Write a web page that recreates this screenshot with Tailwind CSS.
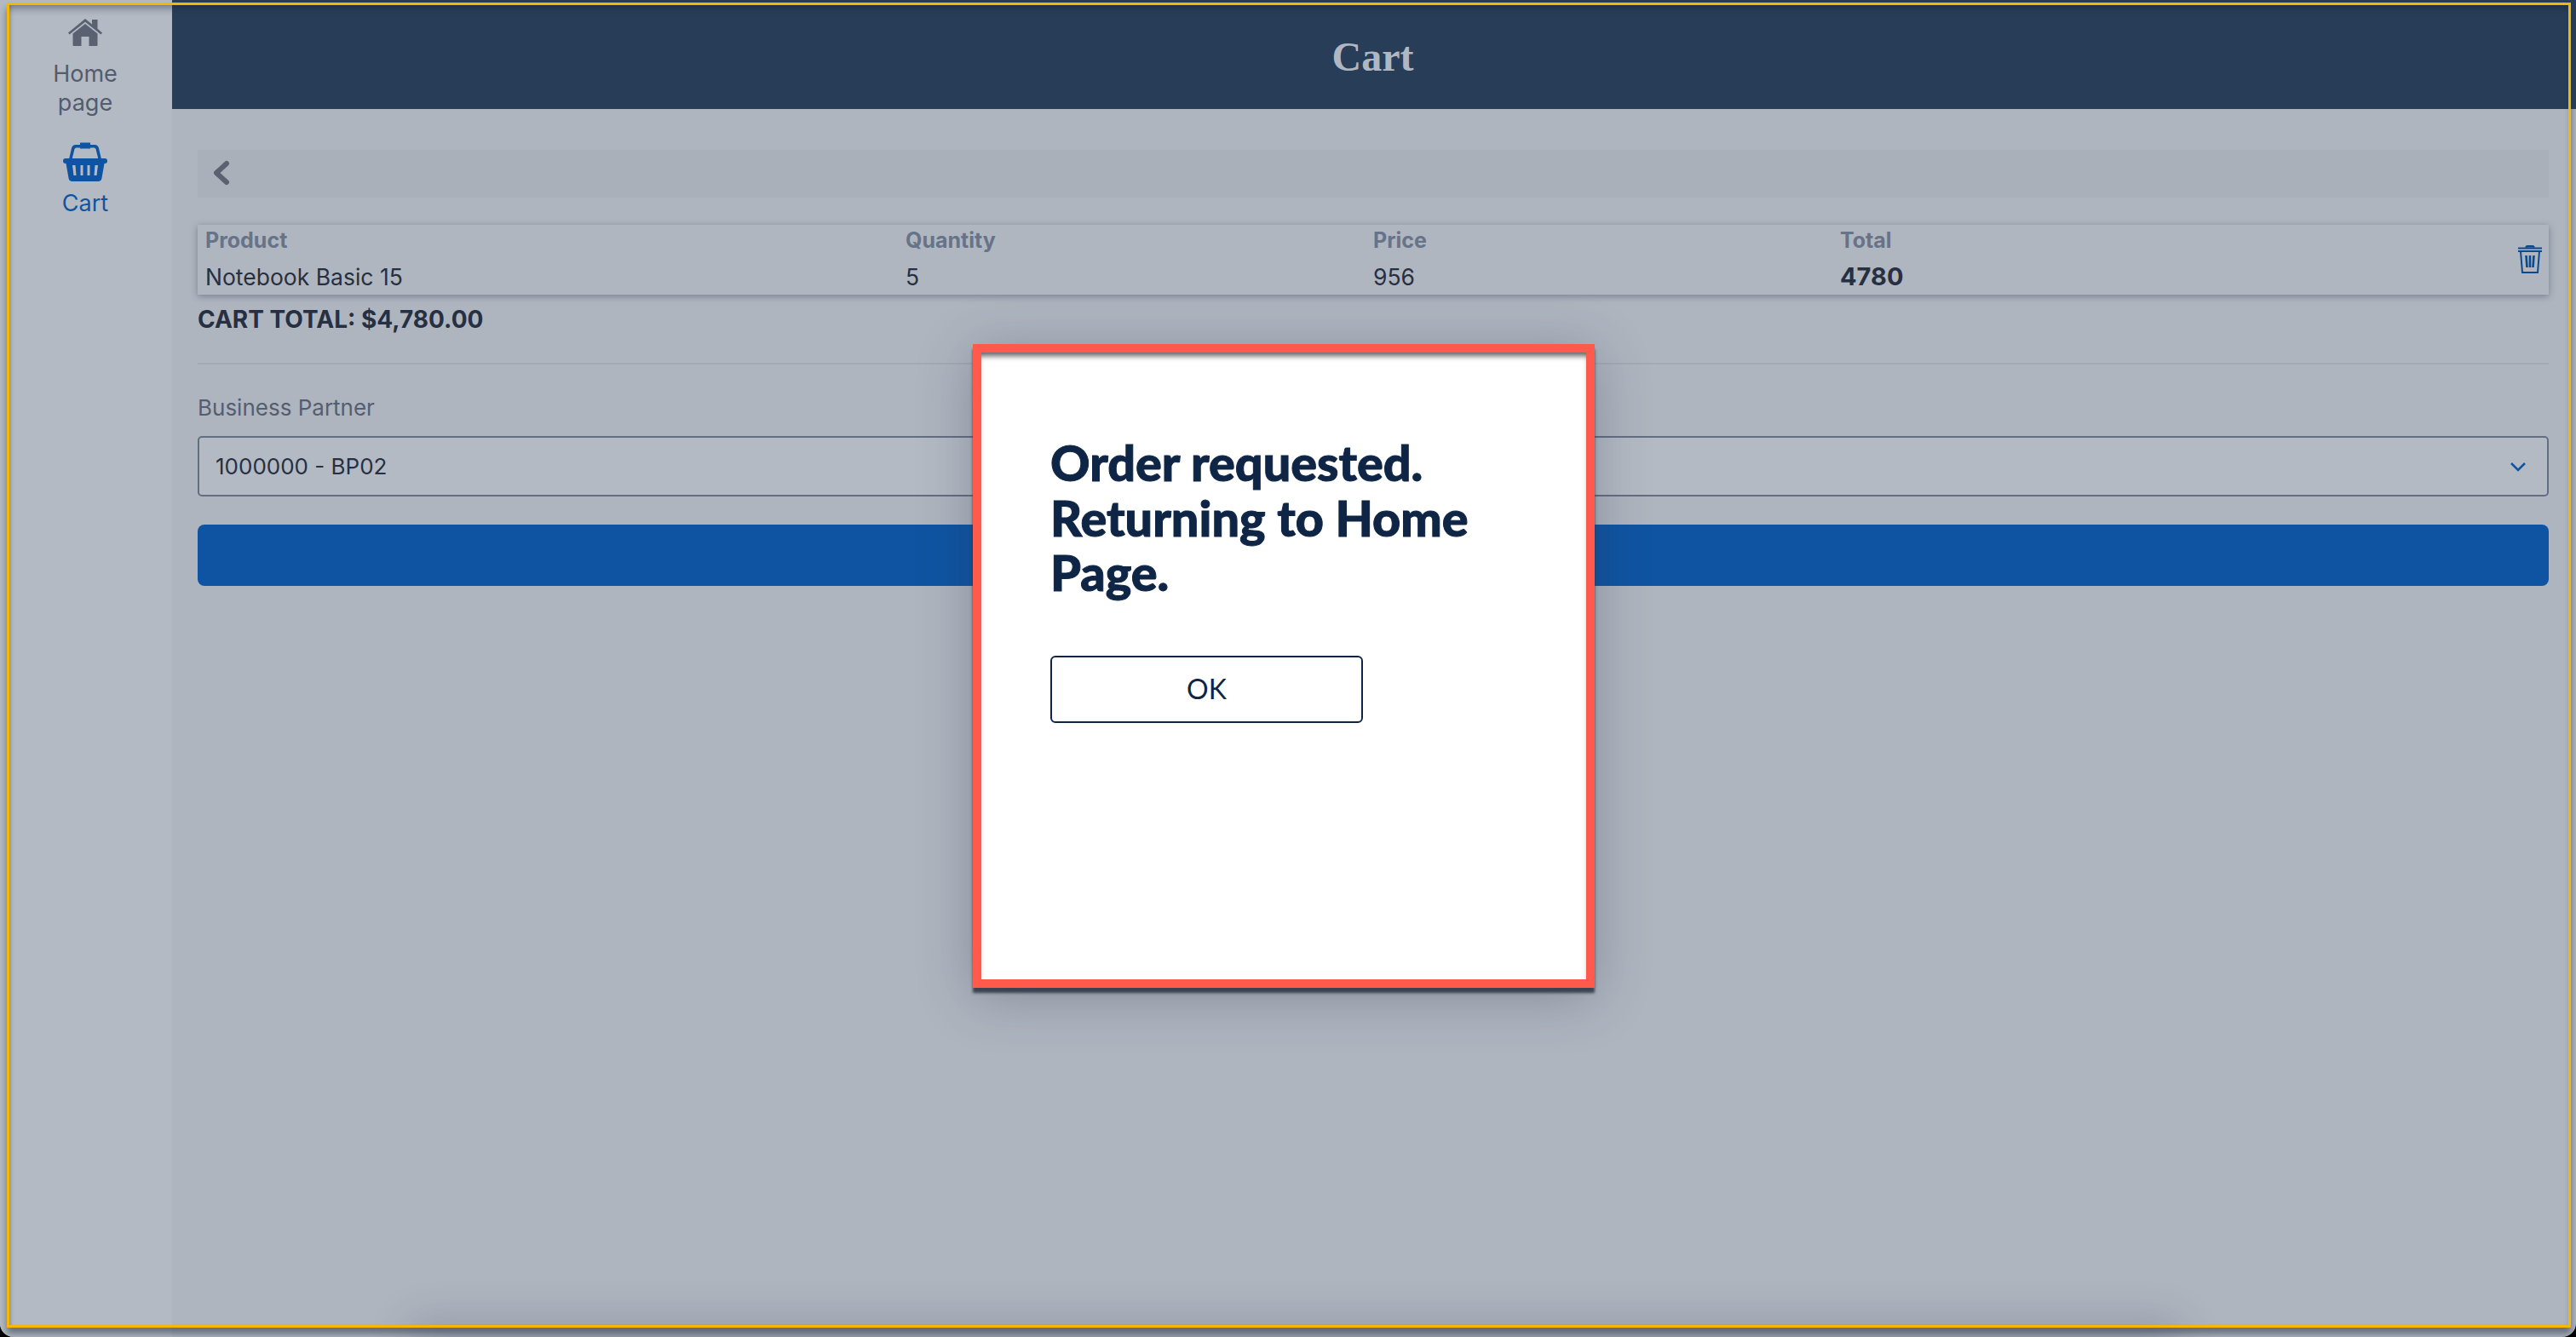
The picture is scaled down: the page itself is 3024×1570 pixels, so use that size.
<!DOCTYPE html>
<html lang="en">
<head>
  <meta charset="UTF-8" />
  <title>Cart</title>
  <script src="https://cdn.jsdelivr.net/npm/@tailwindcss/browser@4"></script>
</head>
<body class="bg-black">
  <div class="relative w-[3024px] h-[1570px] overflow-hidden rounded-b-[16px] flex bg-[#aeb5bf] font-['Inter',sans-serif]">

    <!-- sidebar -->
    <aside class="w-[202px] shrink-0 flex flex-col items-center pr-[2px] bg-[#b3bac4] text-[27px] leading-[34px]">
      <svg class="mt-[22px] w-[40px] h-[32px]" viewBox="0 0 40 32" fill="#5a6272">
        <path d="M20 0 L28 6.500 V1 H34.500 V11.800 L40 16.500 L38.500 18.500 L20 3.700 L1.500 18.500 L0 16.500 Z" />
        <path d="M20 6 L34.500 17.500 V31 Q34.500 32 33.500 32 H24.500 V21 H15.500 V32 H6.500 Q5.500 32 5.500 31 V17.500 Z" />
      </svg>
      <div class="mt-[16px] text-center text-[#545c6c]">Home<br>page</div>
      <svg class="mt-[29px] w-[52px] h-[46px]" viewBox="0 0 52 46" fill="#0f54a2">
        <path d="M7 20 L10 7 Q11 3 15 3 H20 V0.500 H32 V3 H37 Q41 3 42 7 L45 20 H41.500 L38.500 8 Q38 6.500 36.500 6.500 H32 V7.500 H20 V6.500 H15.500 Q14 6.500 13.500 8 L10.500 20 Z" />
        <path fill-rule="evenodd" d="M3 19 H49 Q52 19 52 22 Q52 25 49 25 H48.500 L45.500 42 Q45 46 41 46 H11 Q7 46 6.500 42 L3.500 25 H3 Q0 25 0 22 Q0 19 3 19 Z M11 27 L12.500 39 H15.500 L14.500 27 Z M20.500 27 V39 H23.500 V27 Z M28.500 27 V39 H31.500 V27 Z M37.500 27 L36.500 39 H39.500 L41 27 Z" />
      </svg>
      <div class="mt-[9px] text-[#0f54a2]">Cart</div>
    </aside>

    <!-- main -->
    <main class="flex-1 flex flex-col">
      <header class="h-[128px] flex items-center justify-center pt-[5px] pr-[3px] bg-[#283e58]">
        <h1 class="font-['Liberation_Serif',serif] font-bold text-[48px] text-[#b0b7c2]">Cart</h1>
      </header>

      <div class="flex flex-col pl-[30px] pr-[32px]">
        <div class="mt-[48px] h-[56px] flex items-center pl-[18px] pb-[2px] bg-[#a9b0ba]">
          <svg class="w-[20px] h-[30px]" viewBox="0 0 20 30" fill="none" stroke="#5a6272" stroke-width="6" stroke-linecap="round" stroke-linejoin="round">
            <path d="M16 4 L4 15 L16 26" />
          </svg>
        </div>

        <div class="relative mt-[32px] h-[82px] bg-[#afb6c0] shadow-[0_2px_8px_rgba(40,50,70,0.4)] grid grid-cols-[822px_549px_548px_1fr] pl-[9px] pt-[2px]">
          <div>
            <div class="text-[25px] leading-[32px] font-bold text-[#667388]">Product</div>
            <div class="mt-[10px] text-[26.500px] leading-[34px] text-[#263042]">Notebook Basic 15</div>
          </div>
          <div>
            <div class="text-[25px] leading-[32px] font-bold text-[#667388]">Quantity</div>
            <div class="mt-[10px] text-[26.500px] leading-[34px] text-[#263042]">5</div>
          </div>
          <div>
            <div class="text-[25px] leading-[32px] font-bold text-[#667388]">Price</div>
            <div class="mt-[10px] text-[26.500px] leading-[34px] text-[#263042]">956</div>
          </div>
          <div>
            <div class="text-[25px] leading-[32px] font-bold text-[#667388]">Total</div>
            <div class="mt-[10px] text-[29px] leading-[34px] font-bold text-[#263042]">4780</div>
          </div>
          <svg class="absolute right-[8px] top-[24px] w-[28px] h-[33px]" viewBox="0 0 28 33" fill="none" stroke="#0b4a90" stroke-width="2">
            <path d="M0 3.500 H28 M0 7 H28" />
            <path d="M9 2.500 Q10 0.500 14 0.500 Q18 0.500 19 2.500" fill="#0b4a90" />
            <path d="M3 7 L5 32 H23 L25 7" />
            <path d="M9.500 12 L10.500 26 M14 12 V26 M18.500 12 L17.500 26" stroke-width="2.600" />
          </svg>
        </div>

        <div class="mt-[12px] text-[28px] leading-[34px] font-bold text-[#263042]">CART TOTAL: $4,780.00</div>
        <div class="mt-[34px] h-[2px] bg-[#a3aab5]"></div>
        <div class="mt-[34px] text-[26px] leading-[34px] text-[#545e70]">Business Partner</div>
        <div class="mt-[16px] h-[71px] flex items-center justify-between pl-[19px] pr-[24px] bg-[#b3bac4] border-2 border-[#636e82] rounded-[5px] text-[26px] text-[#263042]">
          <span>1000000 - BP02</span>
          <svg class="w-[20px] h-[12px]" viewBox="0 0 20 12" fill="none" stroke="#0f54a2" stroke-width="2.500">
            <path d="M2 2 L10 10 L18 2" />
          </svg>
        </div>
        <div class="mt-[33px] h-[72px] rounded-[8px] bg-[#0f54a2]"></div>
      </div>
    </main>

    <!-- soft shadow along the bottom edge -->
    <div class="absolute left-[500px] bottom-[-40px] w-[2040px] h-[40px] shadow-[0_0_50px_18px_rgba(40,50,70,0.2)]"></div>

    <!-- browser focus frame -->
    <div class="absolute left-[8px] top-[3px] w-[3010px] h-[1556px] border-[3px] border-[#f5b800] pointer-events-none shadow-[inset_0_8px_8px_-4px_rgba(20,30,50,0.4),inset_4px_0_4px_-3px_rgba(20,30,50,0.25),0_7px_8px_rgba(40,50,70,0.55)]"></div>

    <!-- dialog -->
    <div class="absolute left-[1142px] top-[404px] w-[730px] h-[756px] bg-white border-[10px] border-[#ff5a4c] shadow-[0_6px_3px_rgba(40,50,65,0.85),0_10px_60px_rgba(40,50,70,0.3)]">
      <div class="h-full pl-[81px] pt-[97px] shadow-[inset_0_7px_6px_-3px_rgba(30,30,30,0.7)]">
        <h2 class="font-['Lato',sans-serif] font-black text-[57.500px] leading-[64.500px] [-webkit-text-stroke:1px_#0f2545] text-[#0f2545]">Order requested.<br>Returning to Home<br>Page.</h2>
        <button class="mt-[65px] w-[367px] h-[79px] rounded-[6px] border-2 border-[#0f2545] bg-white font-['Lato',sans-serif] text-[32px] text-[#0f2545]">OK</button>
      </div>
    </div>
  </div>
</body>
</html>
